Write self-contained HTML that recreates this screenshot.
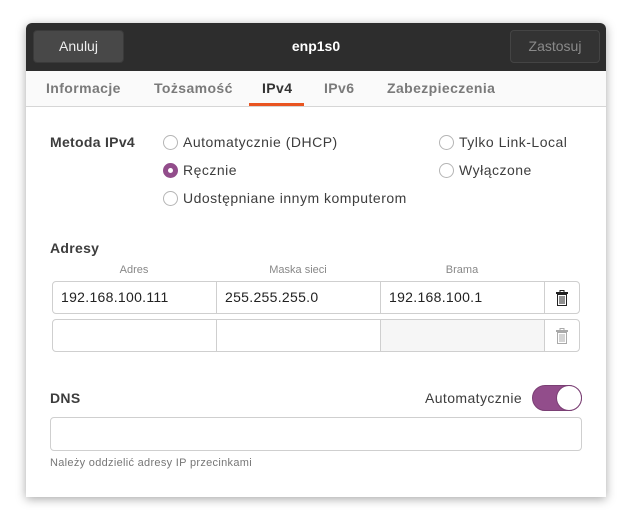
<!DOCTYPE html><html><head><style>
body{margin:0;width:632px;height:527px;background:#fff;font-family:"Liberation Sans",sans-serif;position:relative;overflow:hidden;font-size:14px;color:#3d3d3d}
.a{position:absolute}
.win{left:26px;top:23px;width:580px;height:474px;background:#fff;border-radius:6px 6px 0 0;box-shadow:0 2px 10px rgba(0,0,0,.35);overflow:hidden}
.hdr{left:0;top:0;width:580px;height:48px;background:#2d2d2d}
.btn{top:7px;height:31px;border-radius:4px;color:#eee;font-size:14px;text-align:center;line-height:31px}
.tabs{left:0;top:48px;width:580px;height:35px;background:#fafafa;border-bottom:1px solid #d6d6d6}
.tab{top:57px;font-weight:bold;color:#7a7a7a;font-size:14px;letter-spacing:0.4px}
.r{width:13px;height:13px;border:1px solid #b5b5b5;border-radius:50%;background:#fff}
.lbl{font-size:14px;color:#3d3d3d;letter-spacing:0.5px}
.cell{height:33px;border:1px solid #cfcfcf;background:#fff;box-sizing:border-box;font-size:14px;line-height:31px;padding-left:8px;color:#222;letter-spacing:0.3px}
.hd{font-size:11px;color:#888;text-align:center}
</style></head><body>
<div class="a win">
<div class="a hdr"></div>
<div class="a btn" style="left:7px;width:89px;background:#484848;border:1px solid #3a3a3a">Anuluj</div>
<div class="a" style="left:0;width:580px;top:15px;text-align:center;color:#fff;font-weight:bold">enp1s0</div>
<div class="a btn" style="left:484px;width:88px;background:#333;border:1px solid #444;color:#8a8a8a">Zastosuj</div>
<div class="a tabs"></div>
<div class="a tab" style="left:20px">Informacje</div>
<div class="a tab" style="left:128px">Tożsamość</div>
<div class="a tab" style="left:236px;color:#333">IPv4</div>
<div class="a" style="left:223px;top:80px;width:55px;height:3px;background:#e95420"></div>
<div class="a tab" style="left:298px">IPv6</div>
<div class="a tab" style="left:361px">Zabezpieczenia</div>

<div class="a lbl" style="left:24px;top:111px;font-weight:bold;letter-spacing:0.3px">Metoda IPv4</div>
<div class="a r" style="left:137px;top:112px"></div><div class="a lbl" style="left:157px;top:111px">Automatycznie (DHCP)</div>
<div class="a r" style="left:137px;top:140px;background:#924d8b;border-color:#924d8b"><div class="a" style="left:4px;top:4px;width:5px;height:5px;border-radius:50%;background:#fff"></div></div><div class="a lbl" style="left:157px;top:139px">Ręcznie</div>
<div class="a r" style="left:137px;top:168px"></div><div class="a lbl" style="left:157px;top:167px">Udostępniane innym komputerom</div>
<div class="a r" style="left:413px;top:112px"></div><div class="a lbl" style="left:433px;top:111px">Tylko Link-Local</div>
<div class="a r" style="left:413px;top:140px"></div><div class="a lbl" style="left:433px;top:139px">Wyłączone</div>

<div class="a lbl" style="left:24px;top:217px;font-weight:bold;letter-spacing:0.3px">Adresy</div>
<div class="a hd" style="left:26px;width:164px;top:241px">Adres</div>
<div class="a hd" style="left:190px;width:164px;top:241px">Maska sieci</div>
<div class="a hd" style="left:354px;width:164px;top:241px">Brama</div>
<div class="a cell" style="left:26px;top:258px;width:165px;border-radius:4px 0 0 4px">192.168.100.111</div>
<div class="a cell" style="left:190px;top:258px;width:165px">255.255.255.0</div>
<div class="a cell" style="left:354px;top:258px;width:165px">192.168.100.1</div>
<div class="a cell" style="left:518px;top:258px;width:36px;border-radius:0 4px 4px 0;text-align:center;padding:0">
<svg width="12" height="16" viewBox="0 0 12 16" style="margin-top:8px"><rect x="4" y="0.5" width="4" height="2" fill="none" stroke="#222"/><rect x="0" y="2" width="12" height="2" fill="#222"/><rect x="1.5" y="4.5" width="9" height="11" fill="none" stroke="#222"/><path d="M4 6v8M6 6v8M8 6v8" stroke="#222"/></svg></div>
<div class="a cell" style="left:26px;top:296px;width:165px;border-radius:4px 0 0 4px"></div>
<div class="a cell" style="left:190px;top:296px;width:165px"></div>
<div class="a cell" style="left:354px;top:296px;width:165px;background:#f6f6f6"></div>
<div class="a cell" style="left:518px;top:296px;width:36px;border-radius:0 4px 4px 0;text-align:center;padding:0">
<svg width="12" height="16" viewBox="0 0 12 16" style="margin-top:8px"><rect x="4" y="0.5" width="4" height="2" fill="none" stroke="#aaa"/><rect x="0" y="2" width="12" height="2" fill="#aaa"/><rect x="1.5" y="4.5" width="9" height="11" fill="none" stroke="#aaa"/><path d="M4 6v8M6 6v8M8 6v8" stroke="#aaa"/></svg></div>

<div class="a lbl" style="left:24px;top:367px;font-weight:bold;letter-spacing:0.3px">DNS</div>
<div class="a lbl" style="left:399px;top:367px;letter-spacing:0.4px">Automatycznie</div>
<div class="a" style="left:506px;top:362px;width:50px;height:26px;border-radius:13px;background:#924d8b;border:1px solid #7a3f74;box-sizing:border-box"><div class="a" style="left:24px;top:0;width:24px;height:24px;border-radius:50%;background:#fff;box-shadow:0 0 0 1px #7a3f74"></div></div>
<div class="a" style="left:24px;top:394px;width:532px;height:34px;border:1px solid #cfcfcf;border-radius:4px;box-sizing:border-box"></div>
<div class="a" style="left:24px;top:434px;font-size:11px;color:#777;letter-spacing:0.3px">Należy oddzielić adresy IP przecinkami</div>
</div>
</body></html>
